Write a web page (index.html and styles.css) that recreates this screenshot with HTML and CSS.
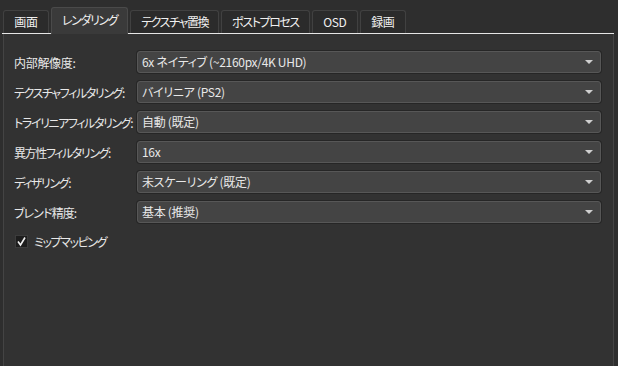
FILE: index.html
```html
<!DOCTYPE html>
<html lang="ja">
<head>
    <meta charset="UTF-8">
    <title>グラフィック設定</title>
    <link rel="stylesheet" href="styles.css">
</head>
<body>
    <!-- タブバー -->
    <div class="tabbar">
        <div class="tab">画面</div>
        <div class="tab kana active">レンダリング</div>
        <div class="tab kana">テクスチャ置換</div>
        <div class="tab kana">ポストプロセス</div>
        <div class="tab">OSD</div>
        <div class="tab">録画</div>
    </div>

    <!-- レンダリング設定パネル -->
    <div class="panel">
        <div class="form">
            <label class="label">内部解像度:</label>
            <div class="combo">6x ネイティブ (~2160px/4K UHD)<span class="arrow"></span></div>

            <label class="label kana">テクスチャフィルタリング:</label>
            <div class="combo">バイリニア (PS2)<span class="arrow"></span></div>

            <label class="label kana">トライリニアフィルタリング:</label>
            <div class="combo">自動 (既定)<span class="arrow"></span></div>

            <label class="label kana">異方性フィルタリング:</label>
            <div class="combo">16x<span class="arrow"></span></div>

            <label class="label kana">ディザリング:</label>
            <div class="combo">未スケーリング (既定)<span class="arrow"></span></div>

            <label class="label mixed">ブレンド精度:</label>
            <div class="combo">基本 (推奨)<span class="arrow"></span></div>
        </div>

        <div class="check">
            <span class="box">
                <svg width="11" height="11" viewBox="0 0 11 11"><path d="M2 5.5 L4.5 9 L9 1.5" fill="none" stroke="#f0f0f0" stroke-width="1.6"/></svg>
            </span>
            <span class="label kana">ミップマッピング</span>
        </div>
    </div>
</body>
</html>
```

FILE: styles.css
```css
/* 全体 */
body {
    margin: 0;
    background: #2e2e2e;
    color: #e8e8e8;
    font-family: "Noto Sans CJK JP", "Noto Sans", sans-serif;
    font-size: 12px;
    font-feature-settings: "palt";
    height: 366px;
    overflow: hidden;
}

/* タブ */
.tabbar {
    display: flex;
    align-items: flex-end;
    gap: 2px;
    padding: 8px 0 0 1px;
    margin: 0 4px 0 2px;
    border-bottom: 1px solid #e6e6e6;
    height: 25px;
}

.tab {
    min-width: 46px;
    height: 23px;
    line-height: 22px;
    padding: 0 10px;
    text-align: center;
    background: #2b2b2b;
    border: 1px solid #414141;
    border-bottom: none;
    border-radius: 3px 3px 0 0;
    box-sizing: border-box;
    color: #f0f0f0;
    letter-spacing: -0.3px;
}

.tab.kana {
    letter-spacing: -1.4px;
}

.tab.active {
    height: 27px;
    line-height: 24px;
    margin-bottom: -1px;
    background: #3a3a3a;
    border-color: #4a4a4a;
}

/* パネル */
.panel {
    margin: 0 4px 0 3px;
    height: 340px;
    box-sizing: border-box;
    background: #323232;
    border-left: 1px solid #444;
    border-right: 1px solid #444;
    padding: 17px 12px 0 10px;
}

.form {
    display: grid;
    grid-template-columns: 123px 1fr;
    row-gap: 8px;
    align-items: center;
}

.label {
    white-space: nowrap;
    letter-spacing: -0.3px;
}

/* カタカナの多いラベルは詰める */
.label.kana {
    letter-spacing: -1.4px;
}

.label.mixed {
    letter-spacing: -0.9px;
}

.combo {
    position: relative;
    height: 22px;
    line-height: 20px;
    box-sizing: border-box;
    padding-left: 4px;
    background: #444;
    border: 1px solid #575757;
    border-radius: 3px;
    box-shadow: 0 0 0 1px #262626;
    letter-spacing: -0.3px;
}

/* 下向き矢印 */
.arrow {
    position: absolute;
    right: 7px;
    top: 8px;
    border-left: 4px solid transparent;
    border-right: 4px solid transparent;
    border-top: 4px solid #cfcfcf;
}

/* チェックボックス */
.check {
    display: flex;
    align-items: center;
    gap: 6px;
    margin-top: 10px;
    padding-left: 1px;
}

.box {
    width: 13px;
    height: 13px;
    box-sizing: border-box;
    background: #1d1d1d;
    border: 1px solid #3c3c3c;
    display: flex;
    align-items: center;
    justify-content: center;
}
```
